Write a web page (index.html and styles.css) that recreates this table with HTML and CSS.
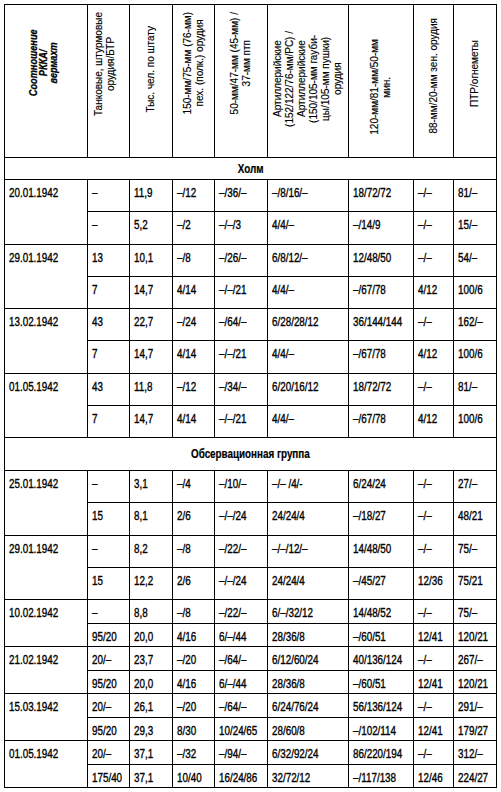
FILE: index.html
```html
<!DOCTYPE html>
<html lang="ru">
<head>
<meta charset="utf-8">
<title>Соотношение РККА/вермахт</title>
<link rel="stylesheet" href="styles.css">
</head>
<body>
<div class="page">
<table class="tbl">
<colgroup>
<col class="c1"><col class="c2"><col class="c3"><col class="c4"><col class="c5"><col class="c6"><col class="c7"><col class="c8"><col class="c9">
</colgroup>
<thead>
<tr class="hdr">
<th class="h1"><span class="vt vt-title">Соотношение<br>РККА/<br>вермахт</span></th>
<th class="h2"><span class="vt">Танковые, штурмовые<br>орудия/БТР</span></th>
<th class="h3"><span class="vt">Тыс. чел. по штату</span></th>
<th class="h4"><span class="vt">150-мм/75-мм (76-мм)<br>пех. (полк.) орудия</span></th>
<th class="h5"><span class="vt">50-мм/47-мм (45-мм) /<br>37-мм птп</span></th>
<th class="h6"><span class="vt">Артиллерийские<br>(152/122/76-мм/РС) /<br>Артиллерийские<br>(150/105-мм гауби-<br>цы/105-мм пушки)<br>орудия</span></th>
<th class="h7"><span class="vt">120-мм/81-мм/50-мм<br>мин.</span></th>
<th class="h8"><span class="vt">88-мм/20-мм зен. орудия</span></th>
<th class="h9"><span class="vt">ПТР/огнеметы</span></th>
</tr>
</thead>
<tbody>
<tr class="sec sec-small"><td colspan="9"><span class="n">Холм</span></td></tr>
<tr class="tall"><td rowspan="2"><span class="n">20.01.1942</span></td><td><span class="n">–</span></td><td><span class="n">11,9</span></td><td><span class="n">–/12</span></td><td><span class="n">–/36/–</span></td><td><span class="n">–/8/16/–</span></td><td><span class="n">18/72/72</span></td><td><span class="n">–/–</span></td><td><span class="n">81/–</span></td></tr>
<tr class="tall"><td><span class="n">–</span></td><td><span class="n">5,2</span></td><td><span class="n">–/2</span></td><td><span class="n">–/–/3</span></td><td><span class="n">4/4/–</span></td><td><span class="n">–/14/9</span></td><td><span class="n">–/–</span></td><td><span class="n">15/–</span></td></tr>
<tr class="tall"><td rowspan="2"><span class="n">29.01.1942</span></td><td><span class="n">13</span></td><td><span class="n">10,1</span></td><td><span class="n">–/8</span></td><td><span class="n">–/26/–</span></td><td><span class="n">6/8/12/–</span></td><td><span class="n">12/48/50</span></td><td><span class="n">–/–</span></td><td><span class="n">54/–</span></td></tr>
<tr class="tall"><td><span class="n">7</span></td><td><span class="n">14,7</span></td><td><span class="n">4/14</span></td><td><span class="n">–/–/21</span></td><td><span class="n">4/4/–</span></td><td><span class="n">–/67/78</span></td><td><span class="n">4/12</span></td><td><span class="n">100/6</span></td></tr>
<tr class="tall"><td rowspan="2"><span class="n">13.02.1942</span></td><td><span class="n">43</span></td><td><span class="n">22,7</span></td><td><span class="n">–/24</span></td><td><span class="n">–/64/–</span></td><td><span class="n">6/28/28/12</span></td><td><span class="n">36/144/144</span></td><td><span class="n">–/–</span></td><td><span class="n">162/–</span></td></tr>
<tr class="tall"><td><span class="n">7</span></td><td><span class="n">14,7</span></td><td><span class="n">4/14</span></td><td><span class="n">–/–/21</span></td><td><span class="n">4/4/–</span></td><td><span class="n">–/67/78</span></td><td><span class="n">4/12</span></td><td><span class="n">100/6</span></td></tr>
<tr class="tall"><td rowspan="2"><span class="n">01.05.1942</span></td><td><span class="n">43</span></td><td><span class="n">11,8</span></td><td><span class="n">–/12</span></td><td><span class="n">–/34/–</span></td><td><span class="n">6/20/16/12</span></td><td><span class="n">18/72/72</span></td><td><span class="n">–/–</span></td><td><span class="n">81/–</span></td></tr>
<tr class="tall"><td><span class="n">7</span></td><td><span class="n">14,7</span></td><td><span class="n">4/14</span></td><td><span class="n">–/–/21</span></td><td><span class="n">4/4/–</span></td><td><span class="n">–/67/78</span></td><td><span class="n">4/12</span></td><td><span class="n">100/6</span></td></tr>
<tr class="sec sec-big"><td colspan="9"><span class="n">Обсервационная группа</span></td></tr>
<tr class="tall"><td rowspan="2"><span class="n">25.01.1942</span></td><td><span class="n">–</span></td><td><span class="n">3,1</span></td><td><span class="n">–/4</span></td><td><span class="n">–/10/–</span></td><td><span class="n">–/– /4/-</span></td><td><span class="n">6/24/24</span></td><td><span class="n">–/–</span></td><td><span class="n">27/–</span></td></tr>
<tr class="tall"><td><span class="n">15</span></td><td><span class="n">8,1</span></td><td><span class="n">2/6</span></td><td><span class="n">–/–/24</span></td><td><span class="n">24/24/4</span></td><td><span class="n">–/18/27</span></td><td><span class="n">–/–</span></td><td><span class="n">48/21</span></td></tr>
<tr class="tall"><td rowspan="2"><span class="n">29.01.1942</span></td><td><span class="n">–</span></td><td><span class="n">8,2</span></td><td><span class="n">–/8</span></td><td><span class="n">–/22/–</span></td><td><span class="n">–/–/12/–</span></td><td><span class="n">14/48/50</span></td><td><span class="n">–/–</span></td><td><span class="n">75/–</span></td></tr>
<tr class="tall"><td><span class="n">15</span></td><td><span class="n">12,2</span></td><td><span class="n">2/6</span></td><td><span class="n">–/–/24</span></td><td><span class="n">24/24/4</span></td><td><span class="n">–/45/27</span></td><td><span class="n">12/36</span></td><td><span class="n">75/21</span></td></tr>
<tr class="short"><td rowspan="2"><span class="n">10.02.1942</span></td><td><span class="n">–</span></td><td><span class="n">8,8</span></td><td><span class="n">–/8</span></td><td><span class="n">–/22/–</span></td><td><span class="n">6/–/32/12</span></td><td><span class="n">14/48/52</span></td><td><span class="n">–/–</span></td><td><span class="n">75/–</span></td></tr>
<tr class="short"><td><span class="n">95/20</span></td><td><span class="n">20,0</span></td><td><span class="n">4/16</span></td><td><span class="n">6/–/44</span></td><td><span class="n">28/36/8</span></td><td><span class="n">–/60/51</span></td><td><span class="n">12/41</span></td><td><span class="n">120/21</span></td></tr>
<tr class="short"><td rowspan="2"><span class="n">21.02.1942</span></td><td><span class="n">20/–</span></td><td><span class="n">23,7</span></td><td><span class="n">–/20</span></td><td><span class="n">–/64/–</span></td><td><span class="n">6/12/60/24</span></td><td><span class="n">40/136/124</span></td><td><span class="n">–/–</span></td><td><span class="n">267/–</span></td></tr>
<tr class="short"><td><span class="n">95/20</span></td><td><span class="n">20,0</span></td><td><span class="n">4/16</span></td><td><span class="n">6/–/44</span></td><td><span class="n">28/36/8</span></td><td><span class="n">–/60/51</span></td><td><span class="n">12/41</span></td><td><span class="n">120/21</span></td></tr>
<tr class="short"><td rowspan="2"><span class="n">15.03.1942</span></td><td><span class="n">20/–</span></td><td><span class="n">26,1</span></td><td><span class="n">–/20</span></td><td><span class="n">–/64/–</span></td><td><span class="n">6/24/76/24</span></td><td><span class="n">56/136/124</span></td><td><span class="n">–/–</span></td><td><span class="n">291/–</span></td></tr>
<tr class="short"><td><span class="n">95/20</span></td><td><span class="n">29,3</span></td><td><span class="n">8/30</span></td><td><span class="n">10/24/65</span></td><td><span class="n">28/60/8</span></td><td><span class="n">–/102/114</span></td><td><span class="n">12/41</span></td><td><span class="n">179/27</span></td></tr>
<tr class="short"><td rowspan="2"><span class="n">01.05.1942</span></td><td><span class="n">20/–</span></td><td><span class="n">37,1</span></td><td><span class="n">–/32</span></td><td><span class="n">–/94/–</span></td><td><span class="n">6/32/92/24</span></td><td><span class="n">86/220/194</span></td><td><span class="n">–/–</span></td><td><span class="n">312/–</span></td></tr>
<tr class="short"><td><span class="n">175/40</span></td><td><span class="n">37,1</span></td><td><span class="n">10/40</span></td><td><span class="n">16/24/86</span></td><td><span class="n">32/72/12</span></td><td><span class="n">–/117/138</span></td><td><span class="n">12/46</span></td><td><span class="n">224/27</span></td></tr>
</tbody>
</table>
</div>
</body>
</html>
```
FILE: styles.css
```css
html, body {
  margin: 0;
  padding: 0;
  background: #fff;
}
.page {
  padding: 4px 0 0 4px;
}
.tbl {
  border-collapse: collapse;
  table-layout: fixed;
  width: 493px;
  color: #000;
  font-family: "Liberation Sans", Arial, sans-serif;
  font-size: 12px;
}
.c1 { width: 83px; }
.c2 { width: 42px; }
.c3 { width: 43px; }
.c4 { width: 42px; }
.c5 { width: 53px; }
.c6 { width: 81px; }
.c7 { width: 65px; }
.c8 { width: 40px; }
.c9 { width: 43px; }

.tbl th, .tbl td {
  border: 1px solid #000;
  padding: 0;
}

/* condensed numerals (Arial Narrow look) */
.n {
  display: inline-block;
  white-space: nowrap;
  transform: scaleX(0.82);
  transform-origin: 0 50%;
  -webkit-text-stroke: 0.35px #000;
}

/* header with rotated captions */
.hdr th {
  box-sizing: border-box;
  height: 153px;
  vertical-align: middle;
  text-align: center;
  font-weight: normal;
  font-size: 10px;
  padding: 0 0 17px 0;
}
.vt {
  display: inline-block;
  writing-mode: vertical-rl;
  transform: rotate(180deg);
  text-align: center;
  white-space: nowrap;
  line-height: 12px;
  -webkit-text-stroke: 0.15px #000;
}
.vt-title {
  font-weight: bold;
  font-style: italic;
  font-size: 11.5px;
  line-height: 10px;
  transform: rotate(180deg) scaleY(0.8);
  -webkit-text-stroke: 0.3px #000;
}
.hdr .h1 { padding: 0 6px 34px 0; }
.hdr .h2 { padding: 0 8px 31px 0; }
.hdr .h3 { padding-bottom: 21px; }
.hdr .h4 { padding-bottom: 34px; }
.hdr .h5 { padding-bottom: 34px; }
.hdr .h6 { padding-bottom: 2px; }
.hdr .h7 { padding: 13px 0 0 0; }
.hdr .h8 { padding-bottom: 9px; }
.hdr .h9 { padding-bottom: 13px; }

/* section titles */
.sec td {
  text-align: center;
  vertical-align: middle;
  font-weight: bold;
}
.sec .n {
  transform-origin: 50% 50%;
  -webkit-text-stroke: 0.2px #000;
}
.sec-small td { height: 21px; }
.sec-big td { height: 32px; }

/* data rows */
.tall td, .short td {
  vertical-align: top;
  text-align: left;
  padding: 6px 0 0 4px;
  line-height: 14px;
}
.tall td { height: 25.25px; }
.short td { height: 16.5px; }
```
